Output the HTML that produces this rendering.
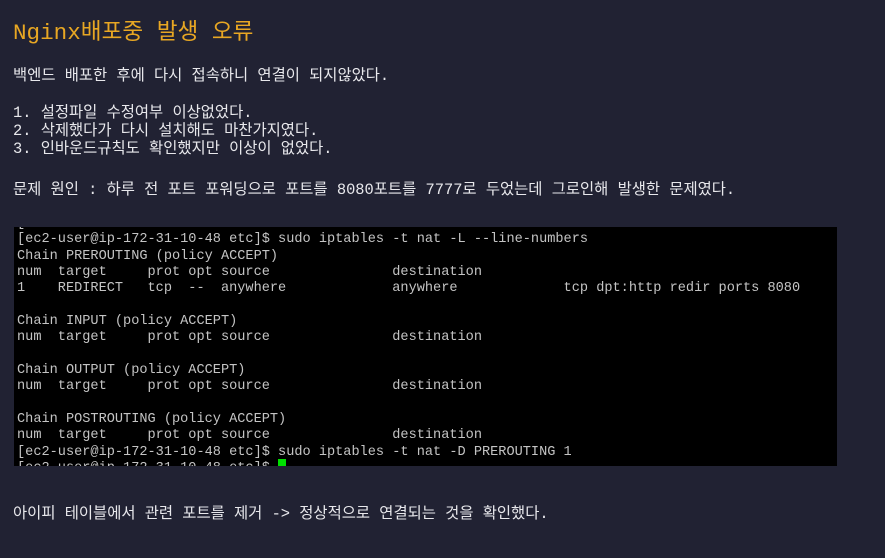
<!DOCTYPE html>
<html><head><meta charset="utf-8"><style>
body{margin:0;background:#212233;width:885px;height:558px;overflow:hidden;position:relative;font-family:"Liberation Mono","Noto Sans CJK KR",monospace;color:#e8e8ec}
.t{position:absolute;left:13px;white-space:pre;font-size:15.4px;line-height:18px}
.h{position:absolute;left:13px;top:13px;font-size:22.6px;color:#e8a723;white-space:pre}
.term{position:absolute;left:14px;top:227px;width:823px;height:239px;background:#000;overflow:hidden}
.term pre{margin:0;position:absolute;left:3px;top:-11px;font-family:"Liberation Mono",monospace;font-size:13.6px;line-height:16.35px;color:#c4c4c4}
.cur{position:absolute;left:264px;top:232px;width:8px;height:7px;background:#00e000}
</style></head><body>
<div class="h">Nginx배포중 발생 오류</div>
<div class="t" style="top:67px">백엔드 배포한 후에 다시 접속하니 연결이 되지않았다.</div>
<div class="t" style="top:104px">1. 설정파일 수정여부 이상없었다.
2. 삭제했다가 다시 설치해도 마찬가지였다.
3. 인바운드규칙도 확인했지만 이상이 없었다.</div>
<div class="t" style="top:181px">문제 원인 : 하루 전 포트 포워딩으로 포트를 8080포트를 7777로 두었는데 그로인해 발생한 문제였다.</div>
<div class="term"><pre>[                                 
[ec2-user@ip-172-31-10-48 etc]$ sudo iptables -t nat -L --line-numbers
Chain PREROUTING (policy ACCEPT)
num  target     prot opt source               destination
1    REDIRECT   tcp  --  anywhere             anywhere             tcp dpt:http redir ports 8080

Chain INPUT (policy ACCEPT)
num  target     prot opt source               destination

Chain OUTPUT (policy ACCEPT)
num  target     prot opt source               destination

Chain POSTROUTING (policy ACCEPT)
num  target     prot opt source               destination
[ec2-user@ip-172-31-10-48 etc]$ sudo iptables -t nat -D PREROUTING 1
[ec2-user@ip-172-31-10-48 etc]$ </pre><div class="cur"></div></div>
<div class="t" style="top:505px">아이피 테이블에서 관련 포트를 제거 -&gt; 정상적으로 연결되는 것을 확인했다.</div>
</body></html>
